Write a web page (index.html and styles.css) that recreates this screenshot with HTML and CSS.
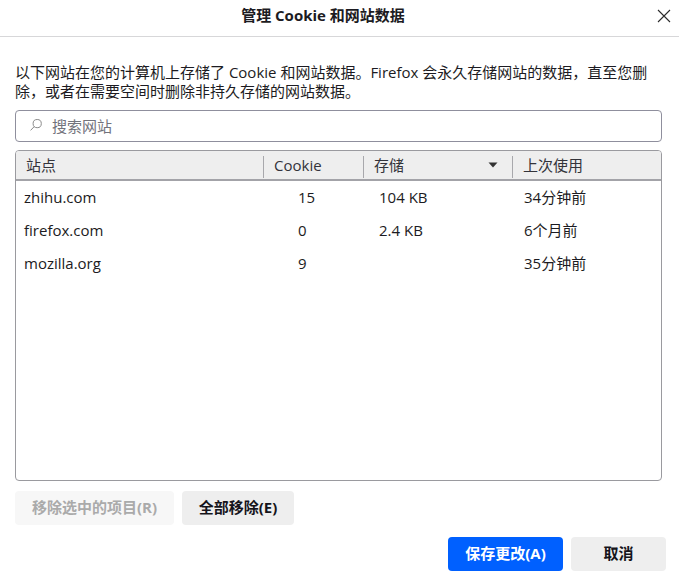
FILE: index.html
```html
<!DOCTYPE html>
<html lang="zh-CN">
<head>
<meta charset="utf-8">
<title>管理 Cookie 和网站数据</title>
<link rel="stylesheet" href="styles.css">
</head>
<body>
<div class="dialog">
  <header class="titlebar">
    <h1 class="title">管理 Cookie 和网站数据</h1>
    <button class="close" aria-label="关闭">
      <svg width="14" height="14" viewBox="0 0 14 14"><path d="M1 1l12 12M13 1L1 13" stroke="#2b2b2b" stroke-width="1.1" fill="none"/></svg>
    </button>
  </header>
  <main class="content">
    <p class="desc">以下网站在您的计算机上存储了 Cookie 和网站数据。Firefox 会永久存储网站的数据，直至您删除，或者在需要空间时删除非持久存储的网站数据。</p>
    <div class="search">
      <svg class="search-icon" width="14" height="14" viewBox="0 0 14 14"><circle cx="8.2" cy="5.6" r="4.1" stroke="#8a8a8a" fill="none"/><path d="M5.2 8.6L1.6 12.4" stroke="#8a8a8a" fill="none"/></svg>
      <span class="search-text">搜索网站</span>
    </div>
    <div class="tree">
      <div class="row head">
        <div class="hcell">站点</div>
        <div class="hcell">Cookie</div>
        <div class="hcell sorted">存储<svg width="10" height="6" viewBox="0 0 10 6"><path d="M0.5 0.5h9L5 5.5z" fill="#333"/></svg></div>
        <div class="hcell">上次使用</div>
      </div>
      <div class="row item"><div class="site">zhihu.com</div><div class="count">15</div><div class="size">104 KB</div><div class="used">34分钟前</div></div>
      <div class="row item"><div class="site">firefox.com</div><div class="count">0</div><div class="size">2.4 KB</div><div class="used">6个月前</div></div>
      <div class="row item"><div class="site">mozilla.org</div><div class="count">9</div><div class="size"></div><div class="used">35分钟前</div></div>
    </div>
    <div class="actions">
      <button class="btn btn-disabled">移除选中的项目(R)</button>
      <button class="btn btn-all">全部移除(E)</button>
    </div>
    <div class="footer">
      <button class="btn btn-primary">保存更改(A)</button>
      <button class="btn btn-cancel">取消</button>
    </div>
  </main>
</div>
</body>
</html>
```
FILE: styles.css
```css
* { box-sizing: border-box; }
html, body { margin: 0; padding: 0; }
body {
  width: 679px;
  height: 584px;
  overflow: hidden;
  background: #fff;
  color: #1c1b22;
  font-family: "Open Sans", "Noto Sans CJK SC", sans-serif;
  font-size: 15px;
}
.titlebar {
  height: 37px;
  border-bottom: 1px solid #d7d7d9;
  position: relative;
  display: flex;
  align-items: center;
  justify-content: center;
  padding: 0 33px 7px 0;
}
.title { margin: 0; font-size: 15px; font-weight: 700; line-height: 20px; }
.close {
  position: absolute;
  right: 8px;
  top: 9px;
  width: 14px;
  height: 14px;
  padding: 0;
  border: 0;
  background: none;
  display: flex;
}
.content { padding: 26px 13px 0 15px; }
.desc { margin: 0; width: 640px; line-height: 19px; }
.search {
  margin-top: 9px;
  width: 647px;
  height: 32px;
  border: 1px solid #8f8f9d;
  border-radius: 4px;
  display: flex;
  align-items: center;
  padding: 0 0 2px 13px;
}
.search-text { margin-left: 9px; color: #73737c; }
.tree {
  margin-top: 8px;
  width: 647px;
  height: 331px;
  border: 1px solid #9a9a9f;
  border-radius: 4px;
  overflow: hidden;
}
.row { display: grid; grid-template-columns: 247px 100px 149px 1fr; }
.head {
  height: 30px;
  background: #eeeeee;
  border-bottom: 2px solid #a3a3a8;
  margin-bottom: 1px;
}
.hcell {
  display: flex;
  align-items: center;
  justify-content: space-between;
  height: 22px;
  margin-top: 5px;
  padding: 0 0 5px 10px;
  border-left: 1px solid #a8a8ac;
  color: #33333a;
}
.hcell:first-child { border-left: 0; }
.sorted { padding-right: 14px; }
.item { height: 33px; align-items: center; padding-bottom: 4px; }
.site { padding-left: 8px; }
.count { padding-left: 35px; }
.size { padding-left: 16px; }
.used { padding-left: 12px; }
.actions { display: flex; gap: 8px; margin-top: 10px; }
.footer { display: flex; justify-content: flex-end; gap: 8px; margin-top: 12px; }
.btn {
  height: 34px;
  padding: 0 0 4px;
  border: 0;
  border-radius: 4px;
  font: inherit;
  font-weight: 700;
  color: #15141a;
  background: #eeeeee;
}
.btn-disabled { width: 159px; background: #f7f7f7; color: #aaaaaa; }
.btn-all { width: 112px; }
.btn-primary { width: 115px; background: #0060ff; color: #fff; }
.btn-cancel { width: 95px; }
```
